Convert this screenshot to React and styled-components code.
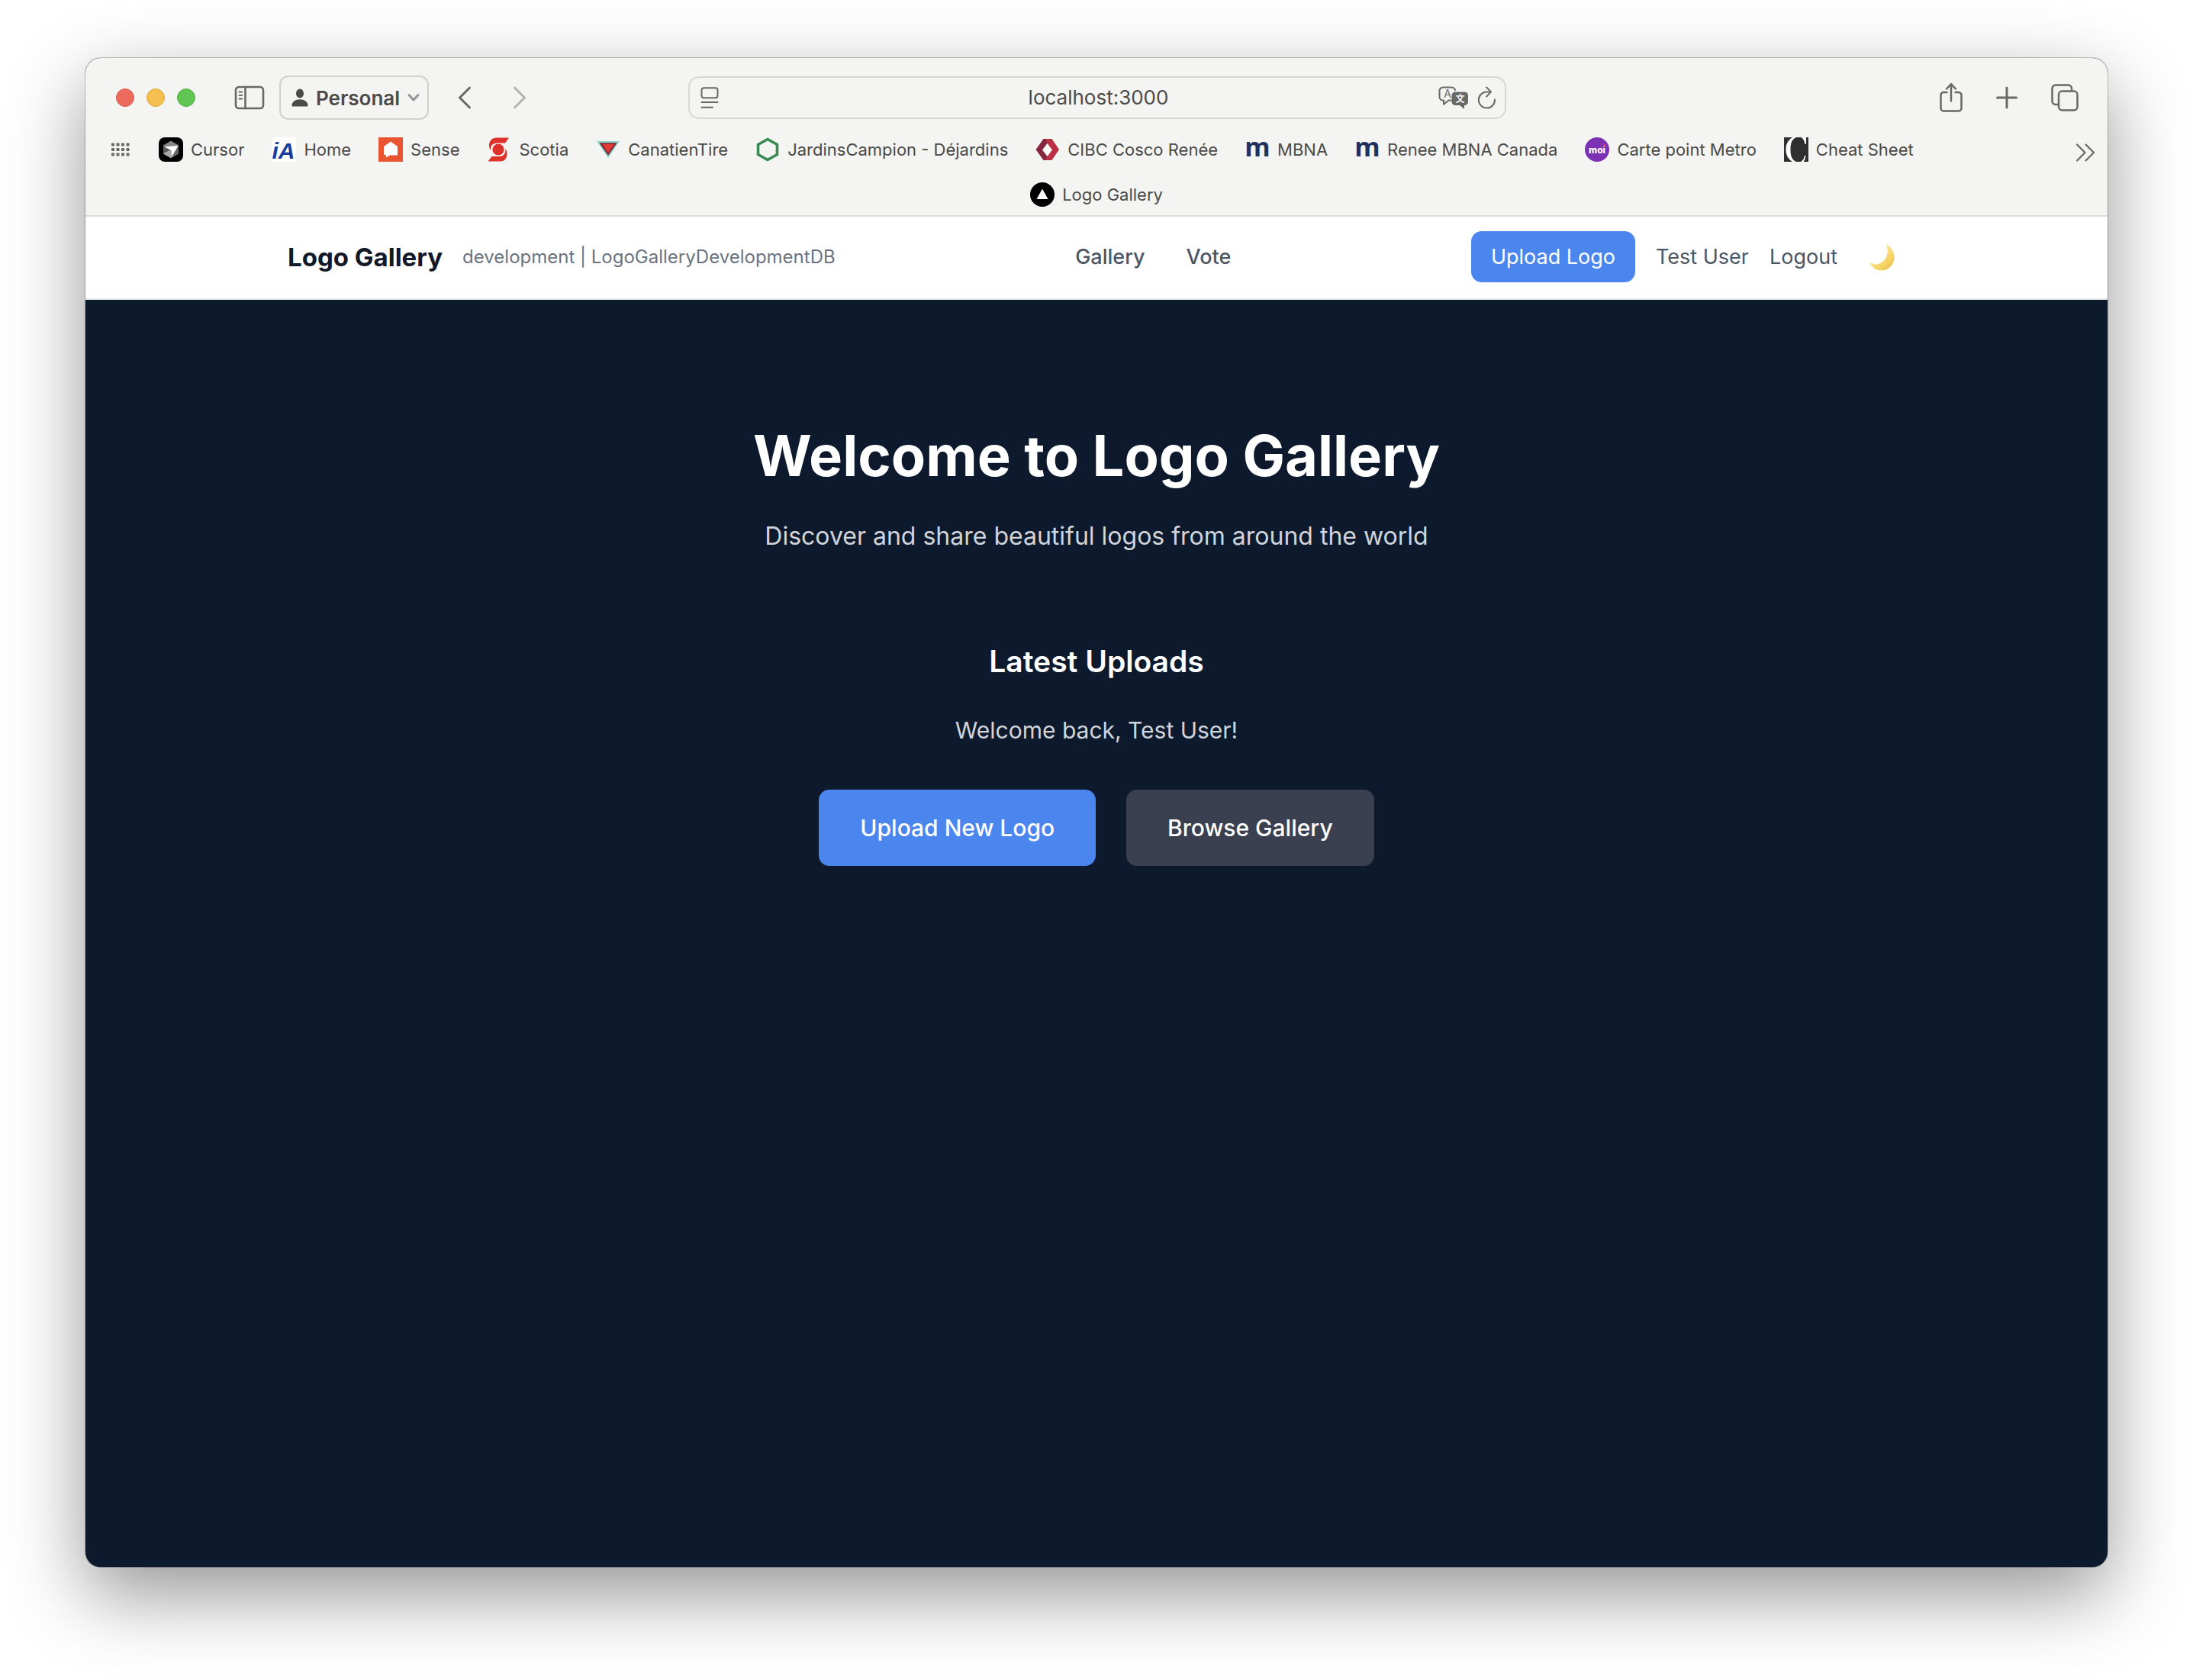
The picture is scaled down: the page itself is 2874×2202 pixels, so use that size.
import React from "react";
import styled, { createGlobalStyle } from "styled-components";

const GlobalStyle = createGlobalStyle`
  *, *::before, *::after { box-sizing: border-box; }
  body {
    margin: 0;
    background: #ffffff;
    font-family: Inter, "Liberation Sans", sans-serif;
  }
  h1, h2, p, ul { margin: 0; padding: 0; }
  ul { list-style: none; }
  a { color: inherit; text-decoration: none; }
  button, input { font-family: inherit; }
  svg { display: block; flex: none; overflow: visible; }
`;

const Desktop = styled.div`
  display: flex;
  min-height: 100vh;
  padding: 76px 112px 148px;
`;

const BrowserWindow = styled.div`
  flex: 1;
  min-width: 0;
  display: flex;
  flex-direction: column;
  border-radius: 20px;
  overflow: hidden;
  background: #0d1a2d;
  box-shadow: 0 0 0 1px rgba(0, 0, 0, 0.22), 0 36px 100px rgba(0, 0, 0, 0.42);
`;

const Chrome = styled.header`
  padding-top: 22px;
  padding-bottom: 11px;
  background: #f4f4f2;
  border-bottom: 2px solid #dcdcdb;
  color: #4a4a49;
`;

const Toolbar = styled.div`
  display: grid;
  grid-template-columns: 1fr minmax(400px, 1072px) 1fr;
  align-items: center;
  height: 60px;
  padding: 0 38px 0 40px;
`;

const ToolGroup = styled.div`
  display: flex;
  align-items: center;
  gap: ${(p) => p.$gap}px;
  justify-content: ${(p) => (p.$end ? "flex-end" : "flex-start")};
`;

const PlainButton = styled.button`
  display: flex;
  align-items: center;
  justify-content: center;
  padding: 0;
  border: 0;
  background: none;
  color: ${(p) => (p.$dim ? "#b3b3b1" : "#686866")};
  cursor: pointer;
`;

const Light = styled.button`
  width: 24px;
  height: 24px;
  padding: 0;
  border: 1px solid ${(p) => p.$edge};
  border-radius: 50%;
  background: ${(p) => p.$fill};
`;

const ProfileButton = styled.button`
  display: flex;
  align-items: center;
  gap: 10px;
  height: 58px;
  padding: 0 10px 0 14px;
  border: 2px solid #d0d0ce;
  border-radius: 12px;
  background: none;
  color: #4a4a49;
  font-size: 26px;
  font-weight: 600;
  cursor: pointer;
`;

const AddressBar = styled.div`
  display: grid;
  grid-template-columns: 90px 1fr 90px;
  align-items: center;
  height: 56px;
  padding: 0 11px 0 14px;
  border: 2px solid #d7d7d5;
  border-radius: 14px;
`;

const AddressInput = styled.input`
  width: 100%;
  padding: 0;
  border: 0;
  outline: 0;
  background: none;
  color: #4a4a49;
  font-size: 26px;
  line-height: 32px;
  text-align: center;
`;

const BookmarksBar = styled.nav`
  display: flex;
  align-items: center;
  justify-content: space-between;
  margin-top: 22px;
  padding: 0 16px 0 34px;
`;

const BookmarkList = styled.ul`
  display: flex;
  align-items: center;
  gap: 36px;
`;

const SiteLink = styled.a`
  display: flex;
  align-items: center;
  gap: 10px;
  height: 32px;
  font-size: 22px;
  line-height: 32px;
  white-space: nowrap;
`;

const TabStrip = styled.div`
  display: flex;
  justify-content: center;
  margin-top: 27px;
`;

const SiteNav = styled.nav`
  display: flex;
  align-items: center;
  justify-content: space-between;
  height: 109px;
  padding: 0 10% 2px;
  background: #ffffff;
  border-bottom: 2px solid #e5e7eb;
  color: #4b5563;
  font-size: 27px;
  line-height: 40px;
  white-space: nowrap;
`;

const NavGroup = styled.div`
  display: flex;
  align-items: center;
  gap: ${(p) => p.$gap}px;
`;

const Brand = styled.a`
  color: #111827;
  font-size: 33px;
  font-weight: 700;
`;

const Environment = styled.span`
  color: #6b7280;
  font-size: 24px;
`;

const NavLink = styled.a`
  font-weight: ${(p) => (p.$strong ? 500 : 400)};
`;

const LinkButton = styled.button`
  padding: 0;
  border: 0;
  background: none;
  color: inherit;
  font-size: 27px;
  line-height: 40px;
  cursor: pointer;
`;

const ActionLink = styled.a`
  display: flex;
  align-items: center;
  height: ${(p) => (p.$large ? 100 : 67)}px;
  padding: 0 ${(p) => (p.$large ? 54 : 26)}px;
  border-radius: 14px;
  background: ${(p) => (p.$muted ? "#3a4050" : "#4b85ee")};
  color: #ffffff;
  font-size: ${(p) => (p.$large ? 30 : 27)}px;
  font-weight: ${(p) => (p.$large ? 500 : 400)};
`;

const ThemeButton = styled(PlainButton)`
  padding: 0 14px;
`;

const Main = styled.main`
  flex: 1;
  display: flex;
  flex-direction: column;
  align-items: center;
  padding: 160px 40px;
  text-align: center;
`;

const Title = styled.h1`
  color: #ffffff;
  font-size: 74px;
  line-height: 88px;
  font-weight: 700;
`;

const Tagline = styled.p`
  margin-top: 38px;
  color: #d1d5db;
  font-size: 32px;
  line-height: 48px;
`;

const SectionTitle = styled.h2`
  margin-top: 116px;
  color: #ffffff;
  font-size: 39px;
  line-height: 48px;
  font-weight: 600;
`;

const Greeting = styled.p`
  margin-top: 42px;
  color: #d1d5db;
  font-size: 30px;
  line-height: 48px;
`;

const Actions = styled.div`
  display: flex;
  gap: 40px;
  margin-top: 54px;
`;

const SidebarIcon = () => (
  <svg width="40" height="32" viewBox="0 0 40 32" fill="none" stroke="currentColor" strokeWidth="2.6" strokeLinecap="round">
    <rect x="2" y="2" width="36" height="28" rx="4" />
    <path d="M14.5 2v28" />
    <path d="M6.5 8.500h3.800M6.500 13h3.800M6.500 17.500h3.800" strokeWidth="1.8" />
  </svg>
);

const PersonIcon = () => (
  <svg width="22" height="24" viewBox="0 0 22 24" fill="currentColor">
    <ellipse cx="11" cy="6.500" rx="5" ry="6" />
    <path d="M0.500 22.200C0.500 17.500 5 14.200 11 14.200s10.500 3.300 10.500 8c0 .9-.5 1.300-1.300 1.300H1.800c-.8 0-1.300-.4-1.300-1.300z" />
  </svg>
);

const SmallChevron = () => (
  <svg width="16" height="12" viewBox="0 0 16 12" fill="none" stroke="#929298" strokeWidth="3" strokeLinecap="round" strokeLinejoin="round">
    <path d="M2 2.500l6 6.500 6-6.500" />
  </svg>
);

const BackIcon = () => (
  <svg width="18" height="30" viewBox="0 0 18 30" fill="none" stroke="currentColor" strokeWidth="3" strokeLinecap="round" strokeLinejoin="round">
    <path d="M15.500 2L2.500 15l13 13" />
  </svg>
);

const ForwardIcon = () => (
  <svg width="18" height="30" viewBox="0 0 18 30" fill="none" stroke="currentColor" strokeWidth="3" strokeLinecap="round" strokeLinejoin="round">
    <path d="M2.500 2l13 13-13 13" />
  </svg>
);

const ReaderIcon = () => (
  <svg width="24" height="28" viewBox="0 0 24 28" fill="none" stroke="currentColor" strokeWidth="2" strokeLinecap="round">
    <rect x="1.500" y="1.200" width="21" height="13" rx="3" />
    <path d="M1.500 20h21M1.500 26.800h14.500" />
  </svg>
);

const TranslateIcon = () => (
  <svg width="40" height="30" viewBox="0 0 40 30">
    <path
      d="M17.500 18.500h-4L7 23.800v-5.300H6A4.500 4.500 0 0 1 1.500 14V6A4.500 4.500 0 0 1 6 1.500h11.500A4.500 4.500 0 0 1 22 6"
      fill="none"
      stroke="currentColor"
      strokeWidth="2"
      strokeLinejoin="round"
    />
    <text x="12" y="15" fontSize="14" textAnchor="middle" fill="currentColor">A</text>
    <path d="M22 7.500h12.500A4.500 4.500 0 0 1 39 12v8.500a4.500 4.500 0 0 1-4.500 4.500H34v5l-6-5h-6a4.500 4.500 0 0 1-4.500-4.500V12A4.500 4.500 0 0 1 22 7.500z" fill="currentColor" />
    <text x="28.500" y="21" fontSize="12" fontWeight="700" textAnchor="middle" fill="#f4f4f2" fontFamily='"Noto Sans CJK SC", sans-serif'>文</text>
  </svg>
);

const ReloadIcon = () => (
  <svg width="25" height="30" viewBox="0 0 25 30" fill="none" stroke="currentColor" strokeWidth="2" strokeLinecap="round" strokeLinejoin="round">
    <path d="M17.500 7.400H12.500A10.600 10.600 0 1 0 23 17.500" />
    <path d="M12.200 1.500l5.800 5.900-5.800 6.100" />
  </svg>
);

const ShareIcon = () => (
  <svg width="30" height="40" viewBox="0 0 30 40" fill="none" stroke="currentColor" strokeWidth="2.500" strokeLinecap="round" strokeLinejoin="round">
    <path d="M9.500 13H5a3.500 3.500 0 0 0-3.500 3.500V34A3.500 3.500 0 0 0 5 37.500h20a3.500 3.500 0 0 0 3.500-3.500V16.500A3.500 3.500 0 0 0 25 13h-4.500" />
    <path d="M15 24.500V2.500M9 8.500l6-6.300 6 6.300" />
  </svg>
);

const PlusIcon = () => (
  <svg width="28" height="30" viewBox="0 0 28 30" fill="none" stroke="currentColor" strokeWidth="3" strokeLinecap="round">
    <path d="M14 2v26M1.500 15h25" />
  </svg>
);

const TabsIcon = () => (
  <svg width="36" height="36" viewBox="0 0 36 36" fill="none" stroke="currentColor" strokeWidth="2.500" strokeLinejoin="round">
    <rect x="10" y="9.500" width="24.500" height="25" rx="4.500" />
    <path d="M9.500 27H6a4.500 4.500 0 0 1-4.500-4.500V6A4.500 4.500 0 0 1 6 1.500h16.500A4.500 4.500 0 0 1 27 6v3" />
  </svg>
);

const GridIcon = () => (
  <svg width="24" height="18" viewBox="0 0 24 18" fill="currentColor">
    {[0, 6.500, 13, 19.500].map((x) =>
      [0.500, 7, 13.500].map((y) => <rect key={`${x}-${y}`} x={x} y={y} width="4" height="4" rx="0.800" />)
    )}
  </svg>
);

const MoreIcon = () => (
  <svg width="26" height="32" viewBox="0 0 26 32" fill="none" stroke="currentColor" strokeWidth="2.200" strokeLinecap="round" strokeLinejoin="round">
    <path d="M2 9.500L12.500 20 2 30.500M13.500 9.500L24 20 13.500 30.500" />
  </svg>
);

const Favicon = ({ children }) => (
  <svg width="32" height="32" viewBox="0 0 32 32" aria-hidden="true">
    {children}
  </svg>
);

const CursorMark = () => (
  <Favicon>
    <rect width="32" height="32" rx="8" fill="#000" />
    <path d="M16 4.700L26 10.500v11L16 27.300 6 21.500v-11z" fill="#777" />
    <path d="M16 4.700L26 10.500l-9.500 2L6 10.500z" fill="#858585" />
    <path d="M6 10.500L16 16 6 21.500z" fill="#5c5c5c" />
    <path d="M6 21.500L16 16v11.300z" fill="#a8a8a8" />
    <path d="M26 10.500v11l-9.500 5.800z" fill="#646464" />
    <path d="M7 12.300L25.500 11 16.500 26.500V17z" fill="#fff" />
  </Favicon>
);

const HomeMark = () => (
  <Favicon>
    <rect width="32" height="32" fill="#fff" />
    <text x="15.500" y="27.500" fontSize="30" fontWeight="700" fontStyle="italic" textAnchor="middle" fill="#173d9c" fontFamily='"Liberation Sans", sans-serif'>iA</text>
  </Favicon>
);

const SenseMark = () => (
  <Favicon>
    <rect width="32" height="32" fill="#e95531" />
    <path d="M16 5.500l9 6.500v11.500H15l-5 3v-3l-3-1V12z" fill="#fff" />
  </Favicon>
);

const ScotiaMark = () => (
  <Favicon>
    <circle cx="15" cy="16" r="7.600" fill="#dc322b" />
    <path d="M29 .5H13C6.500.5 3 5 3 10.500c0 2 .5 4.500 2 6.500C4.500 11 8 7.500 13 7.500h11z" fill="#dc322b" />
    <path d="M1.500 31.500h16c6.500 0 9-5 9-10 0-2.500-.5-4.500-2-6.500.5 6-2.500 10-8 10H6.500z" fill="#dc322b" />
  </Favicon>
);

const TireMark = () => (
  <Favicon>
    <path d="M1 5h30L16 27z" fill="#8fcfcc" />
    <path d="M4.500 7.200h23L16 23.800z" fill="#7a2230" />
    <path d="M8 8.800h16L16 20.800z" fill="#e03a35" />
  </Favicon>
);

const HexMark = () => (
  <Favicon>
    <path d="M16 2.500l12.500 7v13L16 29.500l-12.500-7v-13z" fill="none" stroke="#3c8a53" strokeWidth="3.600" />
  </Favicon>
);

const CibcMark = () => (
  <Favicon>
    <path d="M10.500 2H16v28h-5.500L0.500 16z" fill="#852540" />
    <path d="M12.500 2H21.500L31 16l-9.500 14H12.500l4-6V9z" fill="#bb3042" />
    <path d="M15.500 8l6.500 8.500-6.500 8.500L9 16.500z" fill="#f9f9f8" />
  </Favicon>
);

const MbnaMark = () => (
  <Favicon>
    <text x="16" y="25" fontSize="34" fontWeight="700" textAnchor="middle" fill="#22305c" fontFamily='"Open Sans", sans-serif'>m</text>
  </Favicon>
);

const MoiMark = () => (
  <Favicon>
    <circle cx="16" cy="16" r="16" fill="#7a31b4" />
    <text x="16" y="20.500" fontSize="12" fontWeight="800" textAnchor="middle" fill="#fff">moi</text>
    <circle cx="25.500" cy="10.800" r="1.600" fill="#ee4130" />
  </Favicon>
);

const CheatMark = () => (
  <Favicon>
    <rect width="32" height="32" fill="#2f2f2f" />
    <path d="M16 0C9.500 3 8.500 9 8.500 16S9.500 29 16 32H11C5 28 2.500 23 2.500 16S5 4 11 0z" fill="#fff" />
    <path d="M22 0c2.500 1 4.500 3 5.500 9h1.500V0zM22 32c2.500-1.500 4.500-4 5-8h1.500c-.5 4-1.500 6-3 8z" fill="#fff" />
  </Favicon>
);

const LogoGalleryMark = () => (
  <Favicon>
    <circle cx="16" cy="16" r="16" fill="#000" />
    <path d="M16 8.500l7.500 13.500h-15z" fill="#fff" />
  </Favicon>
);

const MoonIcon = () => (
  <svg width="34" height="36" viewBox="0 0 34 36">
    <defs>
      <linearGradient id="moonGlow" x1="0" y1="0" x2="1" y2="1">
        <stop offset="0.300" stopColor="#fbe596" />
        <stop offset="0.700" stopColor="#f5d363" />
        <stop offset="1" stopColor="#e0ae45" />
      </linearGradient>
    </defs>
    <path d="M22.500 1C29.500 4.500 33.500 11 33.500 18c0 10-7.500 17.500-17 17.500C9.500 35.500 3.500 31 .8 24.500c4.200 3.200 9.500 4 14.500 1.500 9-4.500 12-15 7.200-25z" fill="url(#moonGlow)" />
  </svg>
);

const bookmarks = [
  ["Cursor", CursorMark],
  ["Home", HomeMark],
  ["Sense", SenseMark],
  ["Scotia", ScotiaMark],
  ["CanatienTire", TireMark],
  ["JardinsCampion - Déjardins", HexMark],
  ["CIBC Cosco Renée", CibcMark],
  ["MBNA", MbnaMark],
  ["Renee MBNA Canada", MbnaMark],
  ["Carte point Metro", MoiMark],
  ["Cheat Sheet", CheatMark],
];

function BrowserChrome() {
  return (
    <Chrome>
      <Toolbar>
        <ToolGroup $gap={38}>
          <ToolGroup $gap={51}>
            <ToolGroup $gap={16}>
              <Light aria-label="Close" $fill="#ed6a5f" $edge="#d9564b" />
              <Light aria-label="Minimize" $fill="#f5bf4f" $edge="#dca63b" />
              <Light aria-label="Zoom" $fill="#61c554" $edge="#50ad43" />
            </ToolGroup>
            <ToolGroup $gap={19}>
              <PlainButton aria-label="Sidebar"><SidebarIcon /></PlainButton>
              <ProfileButton>
                <PersonIcon />
                Personal
                <SmallChevron />
              </ProfileButton>
            </ToolGroup>
          </ToolGroup>
          <ToolGroup $gap={54}>
            <PlainButton aria-label="Back"><BackIcon /></PlainButton>
            <PlainButton aria-label="Forward" $dim><ForwardIcon /></PlainButton>
          </ToolGroup>
        </ToolGroup>
        <AddressBar>
          <ToolGroup $gap={0}>
            <PlainButton aria-label="Page menu"><ReaderIcon /></PlainButton>
          </ToolGroup>
          <AddressInput aria-label="Address" defaultValue="localhost:3000" />
          <ToolGroup $gap={11} $end>
            <PlainButton aria-label="Translate"><TranslateIcon /></PlainButton>
            <PlainButton aria-label="Reload"><ReloadIcon /></PlainButton>
          </ToolGroup>
        </AddressBar>
        <ToolGroup $gap={44} $end>
          <PlainButton aria-label="Share"><ShareIcon /></PlainButton>
          <PlainButton aria-label="New tab"><PlusIcon /></PlainButton>
          <PlainButton aria-label="Show tabs"><TabsIcon /></PlainButton>
        </ToolGroup>
      </Toolbar>
      <BookmarksBar aria-label="Bookmarks">
        <ToolGroup $gap={38}>
          <PlainButton aria-label="All bookmarks"><GridIcon /></PlainButton>
          <BookmarkList>
            {bookmarks.map(([name, Mark]) => (
              <li key={name}>
                <SiteLink href="#"><Mark />{name}</SiteLink>
              </li>
            ))}
          </BookmarkList>
        </ToolGroup>
        <PlainButton aria-label="More bookmarks"><MoreIcon /></PlainButton>
      </BookmarksBar>
      <TabStrip>
        <SiteLink href="#"><LogoGalleryMark />Logo Gallery</SiteLink>
      </TabStrip>
    </Chrome>
  );
}

export default function App() {
  return (
    <>
      <GlobalStyle />
      <Desktop>
        <BrowserWindow>
          <BrowserChrome />
          <SiteNav>
            <NavGroup $gap={26}>
              <Brand href="#">Logo Gallery</Brand>
              <Environment>development | LogoGalleryDevelopmentDB</Environment>
            </NavGroup>
            <NavGroup $gap={54}>
              <NavLink href="#" $strong>Gallery</NavLink>
              <NavLink href="#" $strong>Vote</NavLink>
            </NavGroup>
            <NavGroup $gap={27}>
              <ActionLink href="#">Upload Logo</ActionLink>
              <NavLink href="#">Test User</NavLink>
              <LinkButton>Logout</LinkButton>
              <ThemeButton aria-label="Dark mode"><MoonIcon /></ThemeButton>
            </NavGroup>
          </SiteNav>
          <Main>
            <Title>Welcome to Logo Gallery</Title>
            <Tagline>Discover and share beautiful logos from around the world</Tagline>
            <SectionTitle>Latest Uploads</SectionTitle>
            <Greeting>Welcome back, Test User!</Greeting>
            <Actions>
              <ActionLink href="#" $large>Upload New Logo</ActionLink>
              <ActionLink href="#" $large $muted>Browse Gallery</ActionLink>
            </Actions>
          </Main>
        </BrowserWindow>
      </Desktop>
    </>
  );
}
